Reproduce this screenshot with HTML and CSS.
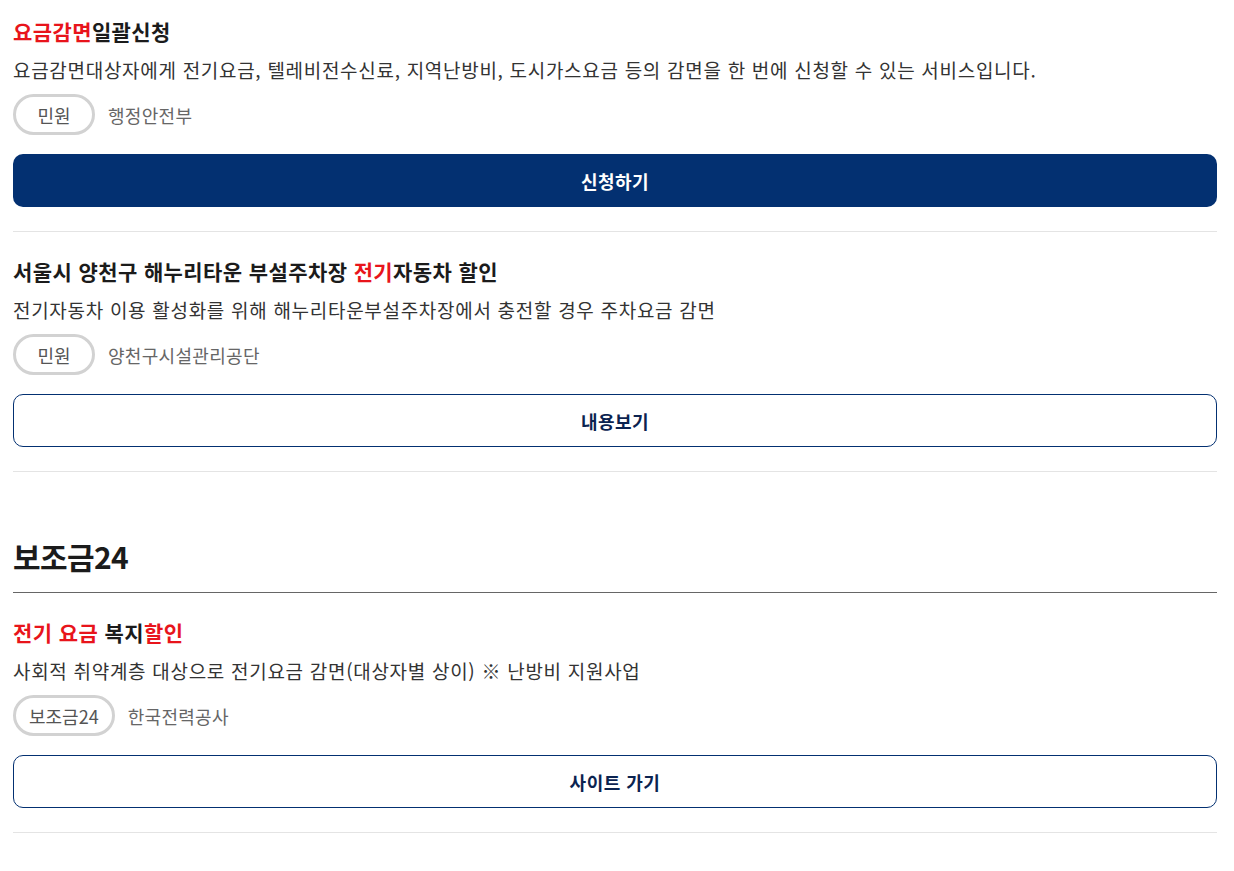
FILE: index.html
```html
<!DOCTYPE html>
<html lang="ko">
<head>
    <meta charset="UTF-8">
    <meta name="viewport" content="width=device-width, initial-scale=1.0">
    <title>감면 서비스</title>
    <link rel="stylesheet" href="styles.css">
</head>
<body>
    <div class="container">
        <ul class="service-list">
            <li class="service">
                <h3 class="service-title"><em>요금감면</em>일괄신청</h3>
                <p class="service-desc">요금감면대상자에게 전기요금, 텔레비전수신료, 지역난방비, 도시가스요금 등의 감면을 한 번에 신청할 수 있는 서비스입니다.</p>
                <div class="service-meta">
                    <span class="tag">민원</span>
                    <span class="agency">행정안전부</span>
                </div>
                <a class="btn btn-primary" href="#">신청하기</a>
            </li>
            <li class="service">
                <h3 class="service-title">서울시 양천구 해누리타운 부설주차장 <em>전기</em>자동차 할인</h3>
                <p class="service-desc">전기자동차 이용 활성화를 위해 해누리타운부설주차장에서 충전할 경우 주차요금 감면</p>
                <div class="service-meta">
                    <span class="tag">민원</span>
                    <span class="agency">양천구시설관리공단</span>
                </div>
                <a class="btn btn-line" href="#">내용보기</a>
            </li>
        </ul>

        <section class="section">
            <h2 class="section-title">보조금24</h2>
            <ul class="service-list">
                <li class="service">
                    <h3 class="service-title"><em>전기 요금</em> 복지<em>할인</em></h3>
                    <p class="service-desc">사회적 취약계층 대상으로 전기요금 감면(대상자별 상이) ※ 난방비 지원사업</p>
                    <div class="service-meta">
                        <span class="tag">보조금24</span>
                        <span class="agency">한국전력공사</span>
                    </div>
                    <a class="btn btn-line" href="#">사이트 가기</a>
                </li>
            </ul>
        </section>
    </div>
</body>
</html>
```

FILE: styles.css
```css
* {
    margin: 0;
    padding: 0;
    box-sizing: border-box;
}

body {
    font-family: 'Noto Sans CJK KR', 'Noto Sans', sans-serif;
    background: #fff;
    color: #222;
}

.container {
    width: 1204px;
    margin-left: 13px;
}

ul {
    list-style: none;
}

a {
    text-decoration: none;
}

.service {
    padding: 0 0 24px;
    border-bottom: 1px solid #e4e4e4;
}

.service + .service,
.section .service {
    padding-top: 25px;
}

.container > .service-list .service:first-child {
    padding-top: 17px;
}

.service-title {
    font-size: 21px;
    line-height: 28px;
    font-weight: 700;
    color: #1b1b1b;
    letter-spacing: 0.4px;
}

.service-title em {
    font-style: normal;
    color: #e8141b;
}

.service-desc {
    margin-top: 10px;
    font-size: 19px;
    line-height: 30px;
    color: #333;
    letter-spacing: 0.7px;
}

.service-meta {
    display: flex;
    align-items: center;
    gap: 13px;
    margin-top: 9px;
}

.tag {
    display: inline-flex;
    align-items: center;
    justify-content: center;
    min-width: 82px;
    height: 41px;
    padding: 0 13px;
    border: 3px solid #d2d2d2;
    border-radius: 21px;
    font-size: 18px;
    color: #555;
}

.agency {
    font-size: 18px;
    letter-spacing: 0.3px;
    color: #666;
}

.btn {
    display: flex;
    align-items: center;
    justify-content: center;
    height: 53px;
    margin-top: 19px;
    border-radius: 10px;
    font-size: 18px;
    font-weight: 700;
    letter-spacing: 0.5px;
}

.btn-primary {
    background: #033071;
    color: #fff;
}

.btn-line {
    border: 1px solid #033071;
    color: #0b2350;
}

.section {
    margin-top: 64px;
}

.section-title {
    font-size: 30px;
    line-height: 40px;
    font-weight: 700;
    color: #1b1b1b;
    letter-spacing: -0.6px;
    padding-bottom: 16px;
    border-bottom: 1px solid #666;
}
```
